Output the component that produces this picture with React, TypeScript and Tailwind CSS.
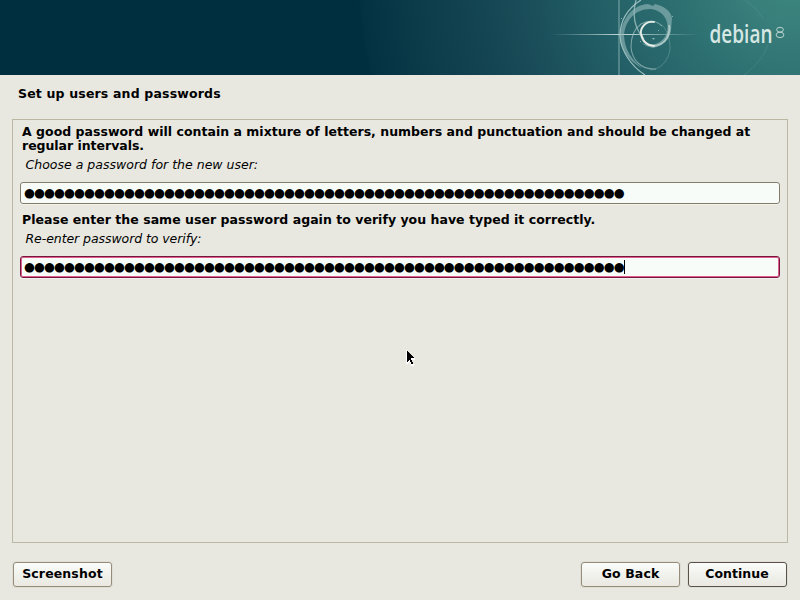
import React from "react";

const DOTS = "●".repeat(60);

function Banner() {
  return (
    <header className="relative h-[75px] w-full shrink-0 overflow-hidden bg-[#002f40]">
      <svg width="800" height="75" viewBox="0 0 800 75" className="block">
        <defs>
          <radialGradient id="glow" gradientUnits="userSpaceOnUse" cx="795" cy="-30" r="438">
            <stop offset="0" stopColor="#3c877f" />
            <stop offset="0.12" stopColor="#397f7b" />
            <stop offset="0.3" stopColor="#2c6e70" />
            <stop offset="0.5" stopColor="#205a63" />
            <stop offset="0.68" stopColor="#174855" />
            <stop offset="0.85" stopColor="#0d3c4a" />
            <stop offset="0.99" stopColor="#033343" />
            <stop offset="1" stopColor="#002f40" />
          </radialGradient>
          <linearGradient id="ray" x1="550" x2="700" y1="0" y2="0" gradientUnits="userSpaceOnUse">
            <stop offset="0" stopColor="#9fc0c0" stopOpacity="0" />
            <stop offset="0.45" stopColor="#c8dcdc" stopOpacity="0.95" />
            <stop offset="0.55" stopColor="#c8dcdc" stopOpacity="0.9" />
            <stop offset="1" stopColor="#9fc0c0" stopOpacity="0" />
          </linearGradient>
        </defs>
        <rect width="800" height="75" fill="url(#glow)" />
        <rect x="618" width="2" height="75" fill="#8fb3b5" opacity="0.45" />
        <rect x="550" y="34" width="150" height="1" fill="url(#ray)" />
        <g fill="none" stroke="#a9c8c8">
          <path d="M641 0C627 9 620 22 620 36C621 51 631 66 645 75" strokeWidth="1.2" opacity="0.9" />
          <path d="M636 0C632 15 635 29 644 39" strokeWidth="1.3" opacity="0.75" />
          <path d="M650 70C660 70 669 60 670 49C670 40 668 31 662 25" strokeWidth="1" opacity="0.3" />
          <path d="M662 26C656 20 648 20 641 24C634 29 631 37 631 47C632 60 641 70 656 69" strokeWidth="1.1" opacity="0.65" />
          <path d="M745 0Q757 8 763 18M768 45Q762 62 744 75" strokeWidth="0.7" opacity="0.2" />
        </g>
        <path d="M620 36C622 19 632 5 648 4L653 6L655 4C664 6 671 11 672 18L671 30C670 38 663 46 653 48L646 46L640 42C649 48 664 44 667 32C670 21 663 10 650 9C636 9 625 20 624 36C625 50 632 60 642 68C629 61 619 49 620 36Z" fill="#93b8ba" opacity="0.62" />
        <path d="M654 22C645 20 640 29 641 34C643 49 661 49 667 38C669 34 670 29 669 25" fill="none" stroke="#b9d2ce" strokeWidth="2" opacity="0.8" />
        <path d="M655 22C645 20 640 29 641 34C643 42 648 46 655 46" fill="none" stroke="#e9eee8" strokeWidth="1.5" />
        <path d="M652 38h3l-1.5 2zM657 34h1v1h-1zM658 30h1v1h-1zM640 41h1v1h-1zM621 18h1v1h-1zM672 16h1v1h-1z" fill="#86b0b0" />
        <text x="709.5" y="43" fontFamily="'Open Sans', sans-serif" fontSize="25" fontWeight="600" textLength="63" lengthAdjust="spacingAndGlyphs" fill="#d6e7e4">debian</text>
        <g fill="none" stroke="#b9d5d1" strokeWidth="1">
          <ellipse cx="780" cy="29.7" rx="3.4" ry="2.4" />
          <ellipse cx="780" cy="34.9" rx="3.9" ry="2.7" />
        </g>
      </svg>
    </header>
  );
}

function PasswordField({ active = false }: { active?: boolean }) {
  return (
    <div
      className={
        active
          ? "flex h-[22px] items-center overflow-hidden rounded-[3px] border border-[#78153f] bg-[#f7fcf8] pl-[3px] shadow-[inset_0_0_0_1px_#e0608c,0_1px_0_#f3f3ee]"
          : "flex h-[22px] items-center overflow-hidden rounded-[3px] border border-[#857b6b] bg-[#f7fcf8] pl-[3px] shadow-[0_1px_0_#f3f3ee]"
      }
    >
      <span className="w-[600px] shrink-0 text-[12.5px] leading-[20px] tracking-[-0.91px] whitespace-pre">{DOTS}</span>
      {active && <span className="h-[14px] w-px bg-black" />}
    </div>
  );
}

function Button({ label, primary = false }: { label: string; primary?: boolean }) {
  return (
    <button
      className={
        primary
          ? "h-[25px] w-[99px] rounded-[3px] border border-[#5a5248] bg-linear-to-b from-[#fafcf9] to-[#e9e8e1] pr-[1px] pb-[2px] text-[12.5px] leading-[21px] font-bold tracking-[0.04px] shadow-[0_0_0_1px_#deded6]"
          : "h-[25px] w-[99px] rounded-[3px] border border-[#968c7a] bg-linear-to-b from-[#fafcf9] to-[#e9e8e1] pb-[2px] text-[12.5px] leading-[21px] font-bold tracking-[0.12px] shadow-[0_0_0_1px_#deded6]"
      }
    >
      {label}
    </button>
  );
}

export default function App() {
  return (
    <div className="relative flex h-[600px] w-[800px] flex-col overflow-hidden bg-[#e8e8e0] font-['DejaVu_Sans',sans-serif] text-[12.5px] text-black">
      <Banner />
      <h1 className="mt-[11px] ml-[18px] h-[15px] text-[12.5px] leading-[15px] font-bold tracking-[0.17px] whitespace-nowrap">Set up users and passwords</h1>
      <main className="mx-3 mt-[18px] h-[424px] border border-[#bcb6a4] px-[7px]">
        <p className="mt-[5px] ml-[2px] leading-[14px] font-bold tracking-[0.02px] whitespace-nowrap">
          A good password will contain a mixture of letters, numbers and punctuation and should be changed at
          <br />
          <span className="tracking-[-0.03px]">regular intervals.</span>
        </p>
        <p className="mt-[4px] mb-[10px] ml-[5.5px] leading-[15px] tracking-[0.01px] italic">Choose a password for the new user:</p>
        <PasswordField />
        <p className="mt-[9px] ml-[2px] leading-[14px] font-bold tracking-[0.03px] whitespace-nowrap">Please enter the same user password again to verify you have typed it correctly.</p>
        <p className="mt-[4px] mb-[10px] ml-[5.5px] leading-[15px] tracking-[-0.07px] italic">Re-enter password to verify:</p>
        <PasswordField active />
      </main>
      <footer className="mt-[19px] flex items-start px-[13px]">
        <Button label="Screenshot" />
        <div className="ml-auto flex gap-2">
          <Button label="Go Back" />
          <Button label="Continue" primary />
        </div>
      </footer>
      <svg className="absolute top-[350px] left-[406px]" width="10" height="16" viewBox="0 0 10 16" shapeRendering="crispEdges">
        <path d="M0 0h1v1h1v1h1v1h1v1h1v1h1v1h1v1h1v1h1v2H6v2h1v2h1v2H5v-2H4v-2H3v1H2v1H0z" fill="#fff" />
        <path d="M1 1h1v1h1v1h1v1h1v1h1v1h1v1h1v1H5v2h1v2h1v2H5v-2H4v-2H3v1H2v1H1z" fill="#000" />
      </svg>
    </div>
  );
}
